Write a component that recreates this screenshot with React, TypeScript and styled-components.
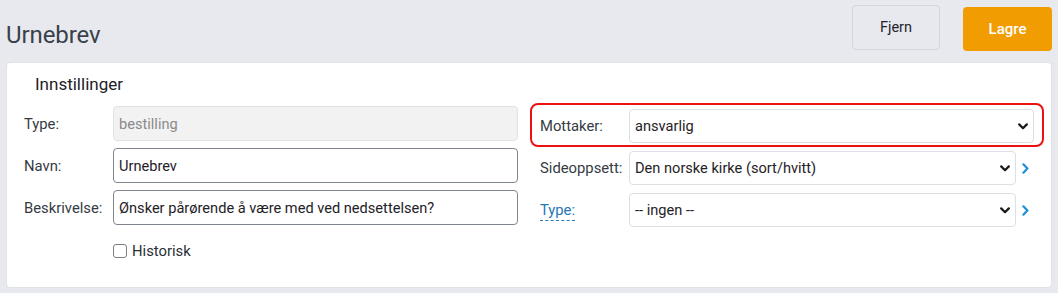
import styled, { createGlobalStyle } from "styled-components";

const GlobalStyle = createGlobalStyle`
  html, body {
    margin: 0;
    padding: 0;
    background: #e7e9ee;
    font-family: Roboto, "Liberation Sans", Arial, sans-serif;
    color: #2f353b;
  }
  * {
    box-sizing: border-box;
  }
`;

function Chevron({ size = 10, color = "#1a1a1a" }: { size?: number; color?: string }) {
  return (
    <svg width={size} height={size * 0.7} viewBox="0 0 10 7" fill="none">
      <path d="M1.2 1.4 L5 5.2 L8.8 1.4" stroke={color} strokeWidth="2.2" strokeLinecap="round" strokeLinejoin="round" />
    </svg>
  );
}

function NextArrow() {
  return (
    <svg width="7" height="11" viewBox="0 0 7 11" fill="none">
      <path d="M1.4 1.3 L5.4 5.5 L1.4 9.7" stroke="#1d8fd6" strokeWidth="2.2" strokeLinecap="round" strokeLinejoin="round" />
    </svg>
  );
}

interface SelectProps {
  value: string;
}

function SelectBox({ value }: SelectProps) {
  return (
    <Select>
      <span>{value}</span>
      <Chevron />
    </Select>
  );
}

export default function App() {
  return (
    <>
      <GlobalStyle />
      <Page>
        <Header>
          <Title>Urnebrev</Title>
          <Actions>
            <SecondaryButton>Fjern</SecondaryButton>
            <PrimaryButton>Lagre</PrimaryButton>
          </Actions>
        </Header>
        <Card>
          <CardTitle>Innstillinger</CardTitle>
          <Columns>
            <LeftColumn>
              <FieldRow>
                <Label>Type:</Label>
                <TextInput $disabled>bestilling</TextInput>
              </FieldRow>
              <FieldRow>
                <Label>Navn:</Label>
                <TextInput>Urnebrev</TextInput>
              </FieldRow>
              <FieldRow>
                <Label>Beskrivelse:</Label>
                <TextInput>Ønsker pårørende å være med ved nedsettelsen?</TextInput>
              </FieldRow>
              <CheckRow>
                <CheckBox />
                Historisk
              </CheckRow>
            </LeftColumn>
            <RightColumn>
              <Highlight>
                <SelectLabel>Mottaker:</SelectLabel>
                <SelectBox value="ansvarlig" />
              </Highlight>
              <SelectRow>
                <SelectLabel>Sideoppsett:</SelectLabel>
                <SelectBox value="Den norske kirke (sort/hvitt)" />
                <LinkSlot>
                  <NextArrow />
                </LinkSlot>
              </SelectRow>
              <SelectRow>
                <SelectLabel>
                  <LinkLabel>Type:</LinkLabel>
                </SelectLabel>
                <SelectBox value="-- ingen --" />
                <LinkSlot>
                  <NextArrow />
                </LinkSlot>
              </SelectRow>
            </RightColumn>
          </Columns>
        </Card>
      </Page>
    </>
  );
}

const Page = styled.div`
  width: 1058px;
  height: 293px;
  padding: 0 6px;
`;

const Header = styled.div`
  display: flex;
  align-items: center;
  justify-content: space-between;
  height: 56px;
`;

const Title = styled.h1`
  margin: 13px 0 0;
  font-size: 24px;
  font-weight: 400;
  color: #39414a;
  letter-spacing: -0.1px;
`;

const Actions = styled.div`
  display: flex;
  align-items: center;
  gap: 23px;
  padding-bottom: 1px;
`;

const SecondaryButton = styled.button`
  width: 88px;
  height: 45px;
  border: 1px solid #d3d6db;
  border-radius: 4px;
  background: #e7e9ee;
  font-family: inherit;
  font-size: 14.5px;
  color: #1f2329;
`;

const PrimaryButton = styled.button`
  width: 89px;
  height: 44px;
  margin-top: 2px;
  border: none;
  border-radius: 4px;
  background: #f19c00;
  font-family: inherit;
  font-size: 15px;
  font-weight: 500;
  color: #ffffff;
`;

const Card = styled.div`
  margin-top: 6px;
  height: 226px;
  background: #ffffff;
  border: 1px solid #dfe2e6;
  border-radius: 4px;
  padding: 11px 8px 0 17px;
`;

const CardTitle = styled.h2`
  margin: 0 0 8px 11px;
  height: 21px;
  line-height: 21px;
  font-size: 17px;
  font-weight: 400;
  color: #1e2227;
`;

const Columns = styled.div`
  display: grid;
  grid-template-columns: 494px 514px;
  column-gap: 12px;
`;

const LeftColumn = styled.div`
  display: flex;
  flex-direction: column;
  gap: 7px;
  padding-top: 3px;
`;

const FieldRow = styled.div`
  display: flex;
  align-items: center;
`;

const Label = styled.div`
  width: 89px;
  flex-shrink: 0;
  font-size: 14.8px;
  color: #353b42;
`;

const TextInput = styled.div<{ $disabled?: boolean }>`
  flex: 1;
  height: 35px;
  display: flex;
  align-items: center;
  padding: 0 5px;
  border: 1px solid ${(p) => (p.$disabled ? "#e2e2e2" : "#80868e")};
  border-radius: 4px;
  background: ${(p) => (p.$disabled ? "#f2f2f2" : "#ffffff")};
  font-size: 14.6px;
  color: ${(p) => (p.$disabled ? "#8a8a8a" : "#1f2226")};
`;

const CheckRow = styled.label`
  display: flex;
  align-items: center;
  gap: 5px;
  margin: 10px 0 0 89px;
  font-size: 14.8px;
  color: #2b3036;
`;

const CheckBox = styled.span`
  width: 14px;
  height: 14px;
  border: 1px solid #7a7f86;
  border-radius: 3px;
  background: #fff;
`;

const RightColumn = styled.div`
  display: flex;
  flex-direction: column;
`;

const Highlight = styled.div`
  display: flex;
  align-items: center;
  height: 44px;
  padding: 4px 8px 2px 8px;
  border: 2px solid #ee1111;
  border-radius: 8px;
  margin-bottom: 4px;
`;

const SelectRow = styled.div`
  display: flex;
  align-items: center;
  padding-left: 10px;
  margin-bottom: 8px;
`;

const SelectLabel = styled.div`
  width: 89px;
  flex-shrink: 0;
  font-size: 14.8px;
  color: #353b42;
`;

const LinkLabel = styled.span`
  color: #2478b5;
  border-bottom: 1px dashed #2478b5;
  padding-bottom: 1px;
`;

const Select = styled.div`
  flex: 1;
  height: 34px;
  display: flex;
  align-items: center;
  justify-content: space-between;
  padding: 0 5px 0 5px;
  border: 1px solid #dcdfe3;
  border-radius: 4px;
  background: #ffffff;
  font-size: 14.6px;
  color: #1f2226;
`;

const LinkSlot = styled.div`
  width: 28px;
  flex-shrink: 0;
  display: flex;
  align-items: center;
  padding-left: 6px;
`;
